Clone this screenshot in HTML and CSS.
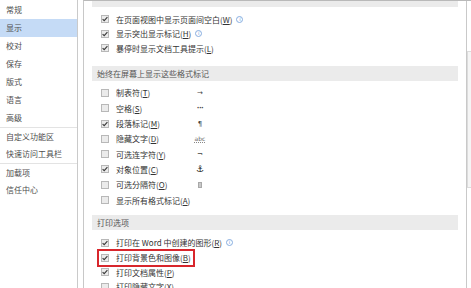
FILE: index.html
```html
<!DOCTYPE html>
<html lang="zh-CN">
<head>
<meta charset="utf-8">
<title>Word 选项 - 显示</title>
<link rel="stylesheet" href="styles.css">
</head>
<body>
<div class="dialog">
  <nav class="sidebar">
    <div class="nav-item">常规</div>
    <div class="nav-item active">显示</div>
    <div class="nav-item">校对</div>
    <div class="nav-item">保存</div>
    <div class="nav-item">版式</div>
    <div class="nav-item">语言</div>
    <div class="nav-item">高级</div>
    <div class="nav-item sep">自定义功能区</div>
    <div class="nav-item">快速访问工具栏</div>
    <div class="nav-item sep">加载项</div>
    <div class="nav-item">信任中心</div>
  </nav>
  <div class="gutter"></div>
  <main class="panel">
    <div class="scroll">
      <div class="band band-cut"></div>

      <div class="group g1">
        <div class="row"><span class="cb on"><svg viewBox="0 0 8 8"><path d="M1.6 4.1 3.2 5.7 6.4 2.1"/></svg></span><span class="label">在页面视图中显示页面间空白(<u>W</u>)</span><span class="info">i</span></div>
        <div class="row"><span class="cb on"><svg viewBox="0 0 8 8"><path d="M1.6 4.1 3.2 5.7 6.4 2.1"/></svg></span><span class="label">显示突出显示标记(<u>H</u>)</span><span class="info">i</span></div>
        <div class="row"><span class="cb on"><svg viewBox="0 0 8 8"><path d="M1.6 4.1 3.2 5.7 6.4 2.1"/></svg></span><span class="label">暴停时显示文档工具提示(<u>L</u>)</span></div>
      </div>

      <div class="band">始终在屏幕上显示这些格式标记</div>

      <div class="group g2">
        <div class="row"><span class="cb"></span><span class="label fixed">制表符(<u>T</u>)</span><span class="sym">→</span></div>
        <div class="row"><span class="cb"></span><span class="label fixed">空格(<u>S</u>)</span><span class="sym dots">···</span></div>
        <div class="row"><span class="cb on"><svg viewBox="0 0 8 8"><path d="M1.6 4.1 3.2 5.7 6.4 2.1"/></svg></span><span class="label fixed">段落标记(<u>M</u>)</span><span class="sym">¶</span></div>
        <div class="row"><span class="cb"></span><span class="label fixed">隐藏文字(<u>D</u>)</span><span class="sym abc">abc</span></div>
        <div class="row"><span class="cb"></span><span class="label fixed">可选连字符(<u>Y</u>)</span><span class="sym">¬</span></div>
        <div class="row"><span class="cb on"><svg viewBox="0 0 8 8"><path d="M1.6 4.1 3.2 5.7 6.4 2.1"/></svg></span><span class="label fixed">对象位置(<u>C</u>)</span><span class="sym anchor">⚓</span></div>
        <div class="row"><span class="cb"></span><span class="label fixed">可选分隔符(<u>O</u>)</span><span class="sym"><span class="box"></span></span></div>
        <div class="row"><span class="cb"></span><span class="label">显示所有格式标记(<u>A</u>)</span></div>
      </div>

      <div class="band">打印选项</div>

      <div class="group g3">
        <div class="row"><span class="cb on"><svg viewBox="0 0 8 8"><path d="M1.6 4.1 3.2 5.7 6.4 2.1"/></svg></span><span class="label">打印在 Word 中创建的图形(<u>R</u>)</span><span class="info">i</span></div>
        <div class="row hl"><span class="cb on"><svg viewBox="0 0 8 8"><path d="M1.6 4.1 3.2 5.7 6.4 2.1"/></svg></span><span class="label">打印背景色和图像(<u>B</u>)</span></div>
        <div class="row"><span class="cb on"><svg viewBox="0 0 8 8"><path d="M1.6 4.1 3.2 5.7 6.4 2.1"/></svg></span><span class="label">打印文档属性(<u>P</u>)</span></div>
        <div class="row"><span class="cb"></span><span class="label">打印隐藏文字(<u>X</u>)</span></div>
      </div>
    </div>
    <div class="scrollbar"><div class="thumb"></div></div>
  </main>
</div>
</body>
</html>
```

FILE: styles.css
```css
html, body {
  margin: 0;
  padding: 0;
  background: #ffffff;
}

body {
  width: 471px;
  height: 288px;
  overflow: hidden;
  font-family: "Noto Sans CJK SC", "Noto Sans", sans-serif;
  font-size: 8px;
  color: #333333;
}

.dialog {
  display: flex;
  height: 288px;
}

/* ---------- left navigation ---------- */
.sidebar {
  width: 77px;
  flex: none;
  border-right: 1px solid #cacaca;
  padding-top: 1px;
  box-sizing: content-box;
}

.nav-item {
  height: 18px;
  line-height: 18px;
  padding-left: 6px;
  color: #4d4d4d;
  white-space: nowrap;
  box-sizing: border-box;
}

.nav-item.active {
  background: #c5dbf6;
}

.nav-item.sep {
  border-top: 1px solid #e3e3e3;
  line-height: 17px;
}

.gutter {
  width: 5px;
  flex: none;
}

/* ---------- right panel ---------- */
.panel {
  flex: 1;
  display: flex;
  border-left: 1px solid #c8c8c8;
  border-top: 1px solid #b9b9b9;
  min-width: 0;
}

.scroll {
  flex: 1;
  padding: 0 8px;
  min-width: 0;
}

.band {
  height: 15px;
  line-height: 15px;
  padding-left: 5px;
  background: #ebebeb;
  color: #555555;
  white-space: nowrap;
}

.band-cut {
  height: 6px;
}

.group {
  padding-left: 9px;
}

.g1 { margin: 5px 0 10.5px; }
.g1 .row { height: 14.5px; }

.g2 { margin: 4.35px 0 7.25px; }
.g2 .row { height: 15.3px; }

.g3 { margin-top: 5.5px; }
.g3 .row { height: 14.7px; }

.row {
  display: flex;
  align-items: center;
  white-space: nowrap;
}

.cb {
  width: 8px;
  height: 8px;
  box-sizing: border-box;
  border: 1px solid #b8b8b8;
  background: #ebebeb;
  flex: none;
  margin-right: 7px;
  display: flex;
  align-items: center;
  justify-content: center;
}

.cb svg {
  width: 8px;
  height: 8px;
  flex: none;
}

.cb path {
  fill: none;
  stroke: #3a3a3a;
  stroke-width: 1.1;
}

.label {
  color: #333333;
}

.label u {
  text-underline-offset: 1px;
}

.label.fixed {
  width: 79px;
  flex: none;
}

.sym {
  width: 10px;
  text-align: center;
  color: #444444;
  font-family: "DejaVu Sans", sans-serif;
  font-size: 7px;
  line-height: 8px;
  display: flex;
  justify-content: center;
}

.sym.dots {
  letter-spacing: -0.5px;
  font-weight: bold;
}

.sym.abc {
  font-size: 6px;
  color: #666666;
  text-decoration: underline dotted #888888;
}

.sym.anchor {
  font-size: 9px;
  line-height: 9px;
  color: #111111;
  font-weight: bold;
}

.box {
  width: 4px;
  height: 6px;
  background: #c9c9c9;
  border: 1px solid #a9a9a9;
  box-sizing: border-box;
  display: block;
}

.info {
  width: 7px;
  height: 7px;
  box-sizing: border-box;
  border: 1px solid #86ade0;
  border-radius: 50%;
  color: #5d8fd2;
  font-family: "DejaVu Sans", sans-serif;
  font-size: 5px;
  line-height: 5px;
  text-align: center;
  margin-left: 4px;
  flex: none;
}

.row.hl {
  position: relative;
  width: max-content;
}

.row.hl::after {
  content: "";
  position: absolute;
  left: -4px;
  right: -4px;
  top: -1px;
  bottom: -2px;
  border: 2px solid #d8262c;
  box-sizing: border-box;
}

/* ---------- scrollbar ---------- */
.scrollbar {
  width: 4px;
  flex: none;
  border-left: 1px solid #c9c9c9;
}

.thumb {
  margin-top: 50px;
  height: 135px;
  border: 1px solid #dcdcdc;
  border-right: none;
  background: #f5f5f5;
}
```
